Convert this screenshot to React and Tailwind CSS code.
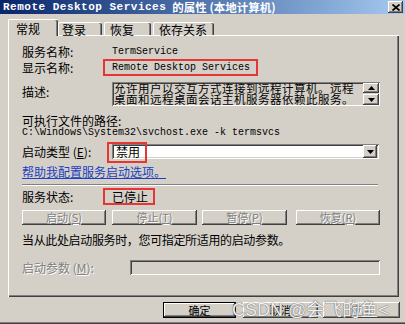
const raised = "shadow-[inset_-1px_-1px_0_#404040,inset_1px_1px_0_#ffffff,inset_-2px_-2px_0_#808080,inset_2px_2px_0_#d4d0c8]";
const sunken = "shadow-[inset_1px_1px_0_#808080,inset_-1px_-1px_0_#ffffff,inset_2px_2px_0_#404040,inset_-2px_-2px_0_#d4d0c8]";
const disabledText = "text-[#808080] [text-shadow:1px_1px_0_#ffffff]";

function Tri({ up }) {
  return (
    <svg width="7" height="4" viewBox="0 0 7 4">
      {up ? <path d="M3.5 0 L7 4 L0 4 Z" fill="#000" /> : <path d="M0 0 L7 0 L3.5 4 Z" fill="#000" />}
    </svg>
  );
}

function DisBtn({ label, k, className }) {
  return (
    <div className={`flex h-[15px] items-center justify-center bg-[#d4d0c8] text-[11px] ${raised} ${disabledText} ${className}`}>
      {label}(<span className="underline">{k}</span>)
    </div>
  );
}

export default function App() {
  return (
    <div className="relative h-[324px] w-[405px] overflow-hidden bg-[#d4d0c8] font-['Noto_Sans_CJK_SC',sans-serif] text-[12px] leading-none text-black shadow-[inset_0_-1px_0_#404040,inset_0_-2px_0_#808080]">
      {/* title bar */}
      <div className="flex h-[14px] items-center bg-gradient-to-r from-[#0a246a] to-[#a6caf0] pl-[3px] pr-[2px]">
        <span className="font-['Liberation_Mono',monospace] text-[11px] font-bold leading-[14px] tracking-[0.5px] text-white">Remote Desktop Services</span>
        <span className="ml-[6px] text-[11.5px] font-bold leading-[14px] text-white">的属性 (本地计算机)</span>
        <div className={`ml-auto flex h-[12px] w-[15px] items-center justify-center bg-[#d4d0c8] ${raised}`}>
          <svg width="8" height="7" viewBox="0 0 8 7">
            <path d="M0.5 0.5 L7.5 6.5 M7.5 0.5 L0.5 6.5" stroke="#000" strokeWidth="1.8" />
          </svg>
        </div>
      </div>

      {/* tabs */}
      <div className="relative z-10 mt-[5px] mb-[-1px] flex h-[17px] items-end pl-[8px]">
        <div className="h-[17px] w-[50px] rounded-t-[2px] border-l border-t border-white bg-[#d4d0c8] pl-[7px] pt-[3px] shadow-[inset_-1px_0_0_#404040,inset_-2px_0_0_#808080]">
          常规
        </div>
        <div className="mb-[1px] h-[13px] w-[44px] rounded-t-[2px] border-l border-t border-white pl-[3px] pt-[1px] shadow-[inset_-1px_0_0_#404040,inset_-2px_0_0_#808080]">
          登录
        </div>
        <div className="mb-[1px] ml-[2px] h-[13px] w-[47px] rounded-t-[2px] border-l border-t border-white pl-[5px] pt-[1px] shadow-[inset_-1px_0_0_#404040,inset_-2px_0_0_#808080]">
          恢复
        </div>
        <div className="mb-[1px] ml-[2px] h-[13px] w-[61px] rounded-t-[2px] border-l border-t border-white pl-[5px] pt-[1px] shadow-[inset_-1px_0_0_#404040,inset_-2px_0_0_#808080]">
          依存关系
        </div>
      </div>

      {/* panel */}
      <div className="ml-[8px] flex h-[262px] w-[391px] flex-col pl-[14px] pt-[9px] shadow-[inset_1px_1px_0_#ffffff,inset_-1px_-1px_0_#404040,inset_-2px_-2px_0_#808080]">
        {/* 服务名称 */}
        <div className="flex h-[15px] items-center">
          <span className="w-[90px]">服务名称:</span>
          <span className="font-['Liberation_Mono',monospace] text-[10px]">TermService</span>
        </div>
        {/* 显示名称 */}
        <div className="flex h-[17px] items-center">
          <span className="w-[81px]">显示名称:</span>
          <span className="flex h-[17px] w-[155px] items-center border-2 border-[#e53535] pl-[7px] font-['Liberation_Mono',monospace] text-[10px]">
            Remote Desktop Services
          </span>
        </div>
        {/* 描述 */}
        <div className="mt-[6px] flex h-[24px] items-start">
          <span className="w-[90px] pt-[4px]">描述:</span>
          <div className={`relative flex h-[24px] w-[268px] ${sunken}`}>
            <div className="pl-[2px] pt-[1px] text-[11.5px] leading-[10.5px] tracking-[0.5px]">
              <div>允许用户以交互方式连接到远程计算机。远程</div>
              <div>桌面和远程桌面会话主机服务器依赖此服务。</div>
            </div>
            <div className="absolute right-[1px] top-[1px] flex flex-col gap-[1px]">
              <div className={`flex h-[10px] w-[16px] items-center justify-center bg-[#d4d0c8] ${raised}`}>
                <Tri up />
              </div>
              <div className={`flex h-[11px] w-[16px] items-center justify-center bg-[#d4d0c8] ${raised}`}>
                <Tri />
              </div>
            </div>
          </div>
        </div>
        {/* path */}
        <div className="mt-[8px] flex h-[13px] items-center">可执行文件的路径:</div>
        <div className="flex h-[12px] items-center font-['Liberation_Mono',monospace] text-[10px]">
          {"C:\\Windows\\System32\\svchost.exe -k termsvcs"}
        </div>
        {/* 启动类型 */}
        <div className="mt-[2px] flex h-[21px] items-center">
          <span className="w-[90px]">
            启动类型 (<span className="underline">E</span>):
          </span>
          <div className={`relative flex h-[15px] w-[267px] items-center bg-white pl-[4px] ${sunken}`}>
            <span>禁用</span>
            <div className={`absolute right-[2px] top-[1px] flex h-[13px] w-[14px] items-center justify-center bg-[#d4d0c8] ${raised}`}>
              <Tri />
            </div>
            <div className="absolute left-[-5px] top-[-2px] h-[21px] w-[40px] border-2 border-[#e53535]" />
          </div>
        </div>
        {/* link */}
        <div className="mt-[3px] flex h-[14px] items-center">
          <span className="text-[#2040c0] underline">帮助我配置服务启动选项。</span>
        </div>
        {/* separator */}
        <div className="mt-[5px] h-[2px] w-[356px] border-t border-b border-t-[#808080] border-b-white" />
        {/* 服务状态 */}
        <div className="mt-[2px] flex h-[17px] items-center">
          <span className="w-[81px]">服务状态:</span>
          <span className="flex h-[17px] w-[52px] items-center border-2 border-[#e53535] pl-[7px]">已停止</span>
        </div>
        {/* buttons */}
        <div className="mt-[5px] flex">
          <DisBtn label="启动" k="S" className="w-[84px]" />
          <DisBtn label="停止" k="T" className="ml-[6px] w-[85px]" />
          <DisBtn label="暂停" k="P" className="ml-[5px] w-[85px]" />
          <DisBtn label="恢复" k="R" className="ml-[9px] w-[84px]" />
        </div>
        <div className="mt-[8px] flex h-[14px] items-center tracking-[-0.35px]">
          当从此处启动服务时，您可指定所适用的启动参数。
        </div>
        {/* 启动参数 */}
        <div className="mt-[13px] flex h-[15px] items-center">
          <span className={`w-[108px] ${disabledText}`}>
            启动参数 (<span className="underline">M</span>):
          </span>
          <div className={`h-[15px] w-[250px] bg-[#d4d0c8] ${sunken}`} />
        </div>
      </div>

      {/* bottom buttons */}
      <div className="mt-[5px] flex h-[16px] pl-[163px] text-[11px]">
        <div className="flex h-[16px] w-[73px] items-center justify-center border border-black bg-[#d4d0c8] shadow-[inset_-1px_-1px_0_#404040,inset_1px_1px_0_#ffffff,inset_-2px_-2px_0_#808080]">
          确定
        </div>
        <div className={`ml-[7px] flex h-[16px] w-[75px] items-center justify-center bg-[#d4d0c8] ${raised}`}>取消</div>
        <div className={`ml-[5px] flex h-[16px] w-[77px] items-center justify-center bg-[#d4d0c8] ${raised} ${disabledText}`}>
          应用
        </div>
      </div>

      {/* watermark */}
      <div className="pointer-events-none absolute left-[232px] top-[299px] whitespace-nowrap font-['Liberation_Sans','Noto_Sans_CJK_SC',sans-serif] text-[18px] leading-[22px] text-white/90 [text-shadow:0_0_1px_#606060,0_0_1px_#606060]">
        CSDN @会飞的鱼&lt;
      </div>
    </div>
  );
}
